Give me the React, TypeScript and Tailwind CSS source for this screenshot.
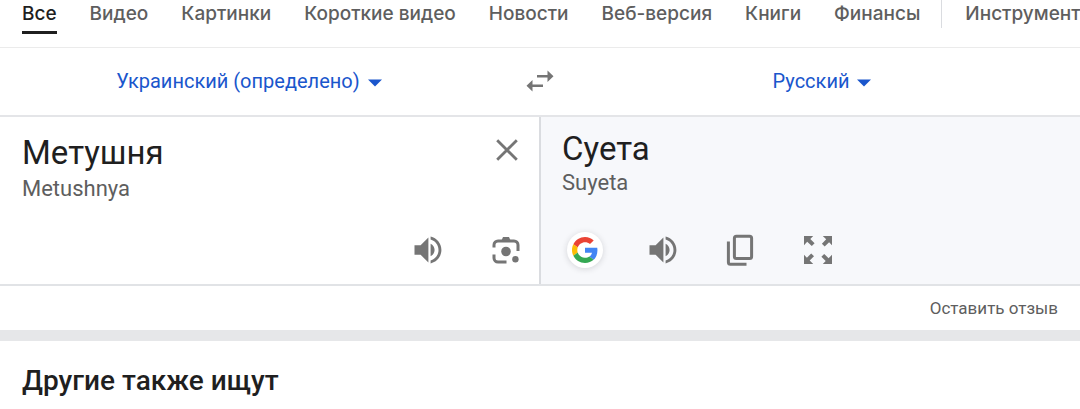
import { useState } from 'react';

const tabs = [
  'Все',
  'Видео',
  'Картинки',
  'Короткие видео',
  'Новости',
  'Веб-версия',
  'Книги',
  'Финансы',
];

const CaretIcon = () => (
  <svg viewBox="0 0 14 8" className="w-[14px] h-2 mt-1" fill="currentColor" aria-hidden="true">
    <path d="M0 0.5h14L7 7.5z" />
  </svg>
);

const SwapIcon = () => (
  <svg viewBox="0 0 28 22" className="w-7 h-[22px]" fill="currentColor" aria-hidden="true">
    <path d="M21.5 0.5 27.5 6.2 21.5 12V7.5H11V5h10.5zM6.5 10 0.5 15.7 6.5 21.5V17H17v-2.6H6.5z" />
  </svg>
);

const CloseIcon = () => (
  <svg viewBox="0 0 22 22" className="size-[22px]" fill="none" stroke="currentColor" strokeWidth="2.8" aria-hidden="true">
    <path d="M1.2 1.2 20.8 20.8M20.8 1.2 1.2 20.8" />
  </svg>
);

const SpeakerIcon = () => (
  <svg viewBox="0 0 28 28" className="size-7" fill="currentColor" aria-hidden="true">
    <path d="M0.5 9.2h6.1L14.400 1.600v25L6.600 18.800H0.5zM16.600 7.800c2.400 1.200 4 3.500 4 6.200s-1.600 5-4 6.200z" />
    <path d="M16.6 0.6C22.9 2 27.4 7.5 27.4 14s-4.5 12-10.8 13.4v-3C21.3 23 24.5 18.9 24.5 14S21.3 5 16.6 3.6z" />
  </svg>
);

const LensIcon = () => (
  <svg viewBox="0 0 28 28" className="size-7" fill="currentColor" aria-hidden="true">
    <path
      d="M2 11.5V9a4 4 0 0 1 4-4h16a4 4 0 0 1 4 4v6M2 18.5V22a4 4 0 0 0 4 4h8.500"
      fill="none"
      stroke="currentColor"
      strokeWidth="3"
    />
    <path d="M9 5.5 11 1h6l2 4.500z" />
    <circle cx="14" cy="15.5" r="4.8" />
    <circle cx="23.4" cy="23.2" r="3.200" />
  </svg>
);

const CopyIcon = () => (
  <svg viewBox="0 0 28 32" className="w-7 h-8" fill="none" stroke="currentColor" strokeWidth="3" aria-hidden="true">
    <rect x="8.4" y="2.2" width="17.2" height="22.4" rx="2" />
    <path d="M2.4 7.5V28.2a2 2 0 0 0 2 2H20.5" />
  </svg>
);

const ExpandIcon = () => (
  <svg viewBox="0 0 28 28" className="size-7" fill="currentColor" aria-hidden="true">
    <path d="M0 0h9.2L6.3 2.9l4.3 4.3-2.8 2.8-4.600-4.200L0 9.200z" />
    <path d="M28 0v9.2l-2.900-2.900-4.400 4.300-2.800-2.800 4.300-4.600L18.800 0z" />
    <path d="M0 28v-9.200l2.900 2.900 4.300-4.300 2.800 2.800-4.300 4.400L9.200 28z" />
    <path d="M28 28h-9.200l2.900-2.900-4.300-4.400 2.800-2.800 4.400 4.300L28 18.800z" />
  </svg>
);

const GoogleIcon = () => (
  <svg viewBox="0 0 48 48" className="size-[26px]" aria-hidden="true">
    <path fill="#EA4335" d="M24 9.5c3.54 0 6.71 1.22 9.21 3.6l6.85-6.85C35.9 2.38 30.47 0 24 0 14.62 0 6.51 5.38 2.56 13.22l7.98 6.19C12.43 13.72 17.74 9.5 24 9.5z" />
    <path fill="#4285F4" d="M46.98 24.55c0-1.57-.15-3.09-.38-4.55H24v9.02h12.94c-.58 2.96-2.26 5.48-4.78 7.18l7.73 6c4.51-4.18 7.09-10.36 7.09-17.65z" />
    <path fill="#FBBC05" d="M10.53 28.59c-.48-1.45-.76-2.99-.76-4.59s.27-3.14.76-4.59l-7.98-6.19C.92 16.46 0 20.12 0 24c0 3.88.92 7.54 2.56 10.78l7.97-6.19z" />
    <path fill="#34A853" d="M24 48c6.48 0 11.93-2.13 15.89-5.81l-7.73-6c-2.15 1.45-4.92 2.3-8.16 2.3-6.26 0-11.57-4.22-13.47-9.91l-7.98 6.19C6.51 42.62 14.62 48 24 48z" />
  </svg>
);

const App = () => {
  const [activeTab, setActiveTab] = useState('Все');

  return (
    <div className="bg-white font-['Roboto',sans-serif] text-[#1f1f1f] overflow-x-hidden">
      {/* Search tabs */}
      <nav className="flex items-start gap-[33px] h-12 pl-[22px] border-b border-[#ebebeb] overflow-hidden whitespace-nowrap font-['Inter',sans-serif] text-[19px] leading-7 font-medium text-[#5e5e5e]">
        {tabs.map((tab) => (
          <button
            key={tab}
            onClick={() => setActiveTab(tab)}
            className={
              tab === activeTab
                ? 'shrink-0 h-[34px] flex items-start border-b-3 border-[#1f1f1f] text-[#1f1f1f]'
                : 'shrink-0'
            }
          >
            {tab}
          </button>
        ))}
        <div className="flex shrink-0 -ml-3 gap-[23px]">
          <span className="w-px h-7 bg-[#dadce0]" />
          <button>Инструменты</button>
        </div>
      </nav>

      {/* Languages */}
      <div className="flex items-center h-[69px] pb-px border-b-2 border-[#e4e5e8] text-[20px] leading-6 text-[#1a56cc]">
        <div className="flex-1 flex justify-center pr-[9px]">
          <button className="flex items-center gap-2">
            Украинский (определено)
            <CaretIcon />
          </button>
        </div>
        <button aria-label="Поменять языки" className="w-[66px] flex justify-center text-[#757575]">
          <SwapIcon />
        </button>
        <div className="flex-1 flex justify-center pr-[9px]">
          <button className="flex items-center gap-2">
            Русский
            <CaretIcon />
          </button>
        </div>
      </div>

      {/* Source and translation */}
      <div className="grid grid-cols-2 border-b-2 border-[#e1e3e6] text-[#757575]">
        <section className="flex flex-col justify-between h-[167px] pl-[22px] pr-4 py-4">
          <div className="flex items-start justify-between pr-[6px]">
            <div>
              <h2 className="text-[33px] leading-10 text-[#1f1f1f]">Метушня</h2>
              <p className="text-[22px] leading-8 text-[#5e5e5e]">Metushnya</p>
            </div>
            <button aria-label="Очистить" className="pt-[6px]">
              <CloseIcon />
            </button>
          </div>
          <div className="flex justify-end gap-[42px]">
            <button aria-label="Прослушать оригинал" className="size-9 grid place-items-center">
              <SpeakerIcon />
            </button>
            <button aria-label="Поиск по картинке" className="size-9 grid place-items-center">
              <LensIcon />
            </button>
          </div>
        </section>

        <section className="flex flex-col justify-between h-[167px] -ml-px pl-[21px] pt-3 pb-4 border-l-2 border-[#dadce0] bg-[#f7f8fb]">
          <div>
            <h2 className="text-[33px] leading-10 text-[#1f1f1f]">Суета</h2>
            <p className="text-[22px] leading-7 text-[#5e5e5e]">Suyeta</p>
          </div>
          <div className="flex items-center justify-between w-[269px] ml-[5px]">
            <button aria-label="Искать в Google" className="size-9 grid place-items-center rounded-full bg-white shadow-[0_1px_6px_rgba(32,33,36,0.16)]">
              <GoogleIcon />
            </button>
            <button aria-label="Прослушать перевод" className="size-9 grid place-items-center">
              <SpeakerIcon />
            </button>
            <button aria-label="Копировать" className="size-9 grid place-items-center">
              <CopyIcon />
            </button>
            <button aria-label="На весь экран" className="size-9 grid place-items-center">
              <ExpandIcon />
            </button>
          </div>
        </section>
      </div>

      {/* Feedback */}
      <div className="flex justify-end items-center h-[55px] pr-[22px] pb-px border-b-11 border-[#e6e7e9]">
        <a href="#feedback" className="text-[17px] leading-6 text-[#5e5e5e]">
          Оставить отзыв
        </a>
      </div>

      <h2 className="px-[22px] pt-5 pb-2 text-[28px] leading-10 font-medium">
        Другие также ищут
      </h2>
    </div>
  );
};

export default App;
